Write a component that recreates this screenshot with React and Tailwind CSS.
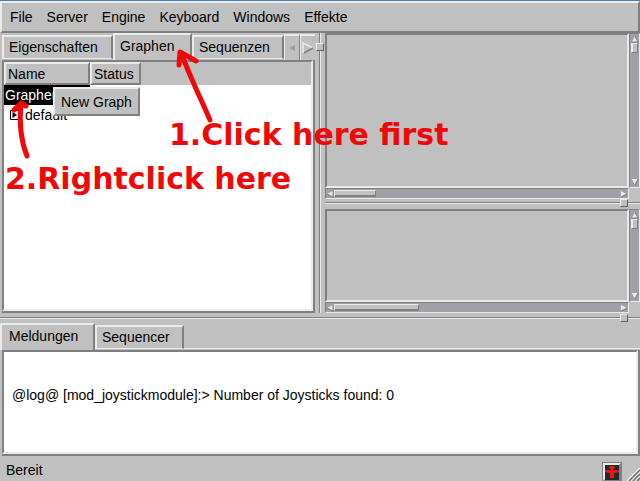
import React from "react";

const raised = "border-t-2 border-l-2 border-r-2 border-b-2 border-t-[#ebebeb] border-l-[#ebebeb] border-r-[#808080] border-b-[#808080]";

function Tab({ active, className, children }) {
  return (
    <button
      type="button"
      role="tab"
      aria-selected={active}
      className={`${active ? "h-[27px] pb-1" : "mb-px h-6 border-b border-b-[#ebebeb] pb-0.5"} shrink-0 truncate border-t-2 border-l-2 border-r-2 border-t-[#ebebeb] border-l-[#ebebeb] border-r-[#808080] bg-[#c0c0c0] pl-[5px] text-left leading-5 ${className}`}
    >
      {children}
    </button>
  );
}

function Arrow({ dir }) {
  const paths = {
    left: ["M8 1L1 4.500L8 8Z", "M1 4.500L8 8V1"],
    right: ["M1 1L8 4.500L1 8Z", "M1 8L8 4.500"],
    up: ["M4.500 1L8 8H1Z", "M4.500 1L8 8H1"],
    down: ["M1 1H8L4.500 8Z", "M8 1L4.500 8"],
  };
  return (
    <svg viewBox="0 0 9 9" className="block h-2 w-2 shrink-0" aria-hidden="true">
      <path d={paths[dir][0]} fill="#ebebeb" />
      <path d={paths[dir][1]} fill="none" stroke="#808080" strokeWidth="1.200" />
    </svg>
  );
}

function Grip({ className }) {
  return <span className={`absolute size-2 border border-t-[#ebebeb] border-l-[#ebebeb] border-r-[#606060] border-b-[#606060] bg-[#c0c0c0] ${className}`} />;
}

function HorizontalSash({ className }) {
  return (
    <div role="separator" className={`relative shrink-0 ${className}`}>
      <div className="h-px bg-[#808080]" />
      <div className="h-px bg-[#ebebeb]" />
      <Grip className="right-3 -top-[3px]" />
    </div>
  );
}

function ScrollView({ thumb, className }) {
  return (
    <section className={`grid grid-cols-[1fr_11px] grid-rows-[1fr_11px] ${className}`}>
      <div className="border-2 border-t-[#808080] border-l-[#808080] border-r-[#ebebeb] border-b-[#ebebeb]" />
      <div className="flex flex-col items-center border border-t-[#808080] border-l-[#808080] border-r-[#ebebeb] border-b-[#ebebeb] bg-[#a0a0a6] py-px">
        <Arrow dir="up" />
        <div className="h-2.5 w-[7px] border border-t-[#ebebeb] border-l-[#ebebeb] border-r-[#808080] border-b-[#808080] bg-[#c0c0c0] shadow-[inset_1px_0_#ebebeb]" />
        <div className="grow" />
        <Arrow dir="down" />
      </div>
      <div className="flex items-center border border-t-[#808080] border-l-[#808080] border-r-[#ebebeb] border-b-[#ebebeb] bg-[#a0a0a6]">
        <Arrow dir="left" />
        <div className={`h-[7px] border border-t-[#ebebeb] border-l-[#ebebeb] border-r-[#808080] border-b-[#808080] bg-[#c0c0c0] shadow-[inset_0_-1px_#808080] ${thumb}`} />
        <div className="grow" />
        <Arrow dir="right" />
      </div>
    </section>
  );
}

function Annotations() {
  return (
    <div className="pointer-events-none absolute inset-0 font-['DejaVu_Sans',sans-serif] text-[30px] leading-8 font-bold whitespace-nowrap text-[#f00808]">
      <svg className="absolute top-0 left-0" width="320" height="240" fill="none" stroke="#f00808" strokeWidth="5" strokeLinecap="round" strokeLinejoin="round" aria-hidden="true">
        <path d="M210 120Q204 106 197 91Q189 73 181 53" />
        <path d="M179 65L180 52L196 61" />
        <path d="M27 156C21 141 19 123 21 103" />
        <path d="M14 110L21 103L26 106" />
      </svg>
      <p className="absolute top-[119px] left-[169px]">1.Click here first</p>
      <p className="absolute top-[163px] left-[5px]">2.Rightclick here</p>
    </div>
  );
}

export default function App() {
  return (
    <div className="relative flex h-screen flex-col overflow-hidden bg-[#c0c0c0] font-['Liberation_Sans',Arial,sans-serif] text-[14px] leading-5 text-black">
      <div className="h-px shrink-0 bg-[#4682b4]" />
      <nav className="flex h-8 shrink-0 items-center gap-3.5 border-2 border-t-[#ebebeb] border-l-[#ebebeb] border-r-[#808080] border-b-[#808080] pl-2">
        {["File", "Server", "Engine", "Keyboard", "Windows", "Effekte"].map((m) => (
          <button type="button" key={m}>{m}</button>
        ))}
      </nav>

      <main className="flex min-h-0 grow">
        <section className="flex w-[315px] shrink-0 flex-col pb-1">
          <div role="tablist" className="flex h-[27px] shrink-0 items-end">
            <Tab className="ml-0.5 w-[111px]">Eigenschaften</Tab>
            <Tab active className="w-[79px]">Graphen</Tab>
            <Tab className="w-[92px]">Sequenzen</Tab>
            <button type="button" aria-label="Zurück" className="flex h-[26px] w-4 items-center justify-center border-t-2 border-l border-r border-t-[#ebebeb] border-l-[#ebebeb] border-r-[#808080]">
              <svg viewBox="0 0 8 8" className="size-2" aria-hidden="true"><path d="M1 4L7 1V7Z" fill="#9c9ca2" /></svg>
            </button>
            <button type="button" aria-label="Weiter" className="flex h-[26px] w-[15px] items-center justify-center border-t-2 border-l border-t-[#ebebeb] border-l-[#ebebeb]">
              <svg viewBox="0 0 12 12" className="size-3" fill="none" aria-hidden="true">
                <path d="M1 11V1L11 6" stroke="#ebebeb" strokeWidth="1.500" />
                <path d="M2 11L11 6" stroke="#808080" strokeWidth="1.500" />
              </svg>
            </button>
          </div>
          <div className="relative ml-0.5 min-h-0 grow border-r-2 border-b-2 border-r-[#808080] border-b-[#808080]">
            <div className="h-full border-2 border-t-[#808080] border-l-[#808080] border-r-[#ebebeb] border-b-[#ebebeb] bg-white">
              <div className="flex h-[23px] bg-[#c0c0c0]">
                <div className={`w-[86px] pl-0.5 ${raised}`}>Name</div>
                <div className={`w-[51px] pl-0.5 ${raised}`}>Status</div>
              </div>
              <ul>
                <li className="h-5 w-[86px] bg-black pl-px leading-[21px] text-white">Graphen</li>
                <li className="flex h-5 items-center pl-1.5">
                  <svg width="13" height="10" viewBox="0 0 13 10" aria-hidden="true">
                    <path d="M.5 .5H8.500V9.500H.5Z" fill="white" stroke="black" />
                    <path d="M2.500 2V8L7 5Z" fill="black" />
                    <path d="M9 5.500H12" stroke="#808080" strokeDasharray="1 1" />
                  </svg>
                  <span className="pl-0.5">default</span>
                </li>
              </ul>
            </div>
            <div role="menu" className={`absolute top-[27px] left-[51px] flex h-[29px] w-[87px] items-center justify-center bg-[#c0c0c0] ${raised}`}>
              <button type="button" role="menuitem">New Graph</button>
            </div>
          </div>
        </section>

        <div role="separator" className="relative mb-1 flex w-2.5 shrink-0 justify-center">
          <div className="w-px bg-[#808080]" />
          <div className="w-px bg-[#ebebeb]" />
          <Grip className="top-2.5 left-px" />
        </div>

        <div className="flex min-w-0 grow flex-col">
          <ScrollView className="h-[166px] shrink-0" thumb="w-[42px]" />
          <HorizontalSash className="mt-[3px] mb-[5px]" />
          <ScrollView className="min-h-0 grow" thumb="w-[85px]" />
          <div className="h-1 shrink-0" />
        </div>
      </main>

      <HorizontalSash className="mb-1" />

      <section className="flex h-[133px] shrink-0 flex-col">
        <div role="tablist" className="flex h-[27px] shrink-0 items-end">
          <Tab active className="w-[95px] pl-[7px]">Meldungen</Tab>
          <Tab className="w-[89px]">Sequencer</Tab>
          <div className="mb-px h-px grow bg-[#ebebeb]" />
        </div>
        <div className="ml-0.5 min-h-0 grow border-r-2 border-b-2 border-r-[#808080] border-b-[#808080]">
          <div className="h-full border-2 border-t-[#808080] border-l-[#808080] border-r-[#ebebeb] border-b-[#ebebeb] bg-white px-2 pt-[33px]">
            @log@ [mod_joystickmodule]:&gt; Number of Joysticks found: 0
          </div>
        </div>
      </section>

      <footer className="flex h-[25px] shrink-0 items-end justify-between pl-1.5">
        <span className="self-center pb-px pt-1">Bereit</span>
        <div className="flex items-end gap-1">
          <svg width="20" height="19" viewBox="0 0 20 19" aria-label="Status" role="img">
            <path d="M0 0H20V19H0Z" fill="#808080" />
            <path d="M1 1H19L17 3H3V17L1 19Z" fill="#ebebeb" />
            <path d="M3 3H17V18H3Z" fill="#282828" />
            <path d="M8 4H12L13 6L11 7V8L17 8V10L12 11L12 16H8V11L3 10V8L9 8V7L7 6Z" fill="#ee1414" />
          </svg>
          <svg width="14" height="14" viewBox="0 0 14 14" aria-hidden="true">
            <path d="M1 14L14 1M5 14L14 5M9 14L14 9" stroke="#ebebeb" strokeWidth="1.500" />
            <path d="M3 14L14 3M7 14L14 7M11 14L14 11" stroke="#707070" strokeWidth="1.500" />
          </svg>
        </div>
      </footer>
      <Annotations />
    </div>
  );
}
